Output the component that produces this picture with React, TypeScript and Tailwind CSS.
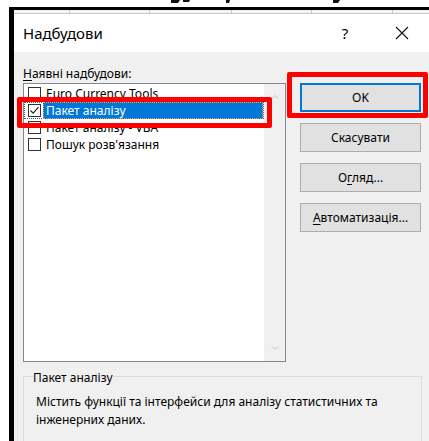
import { ChevronDown, ChevronUp } from 'lucide-react';

interface AddIn {
    name: string;
    checked: boolean;
}

const addIns: AddIn[] = [
    { name: 'Euro Currency Tools', checked: false },
    { name: 'Пакет аналізу', checked: true },
    { name: 'Пакет аналізу - VBA', checked: false },
    { name: "Пошук розв'язання", checked: false },
];

const selectedIndex = 1;

function CheckBox({ checked }: { checked: boolean }) {
    return (
        <span className="w-[13px] h-[13px] border border-[#333333] bg-white flex items-center justify-center shrink-0">
            {checked && (
                <svg width="11" height="11" viewBox="0 0 11 11" fill="none">
                    <path d="M1.5 5.5 L4.2 8.2 L9.5 2.2" stroke="#222" strokeWidth="1.2" />
                </svg>
            )}
        </span>
    );
}

function DialogButton({ children, primary }: { children: React.ReactNode; primary?: boolean }) {
    return (
        <button
            className={`w-[121px] h-[29px] bg-[#e1e1e1] text-[12px] text-black ${primary
                ? 'border-2 border-[#0078d7]'
                : 'border border-[#adadad]'
                }`}
        >
            {children}
        </button>
    );
}

export default function App() {
    return (
        <div className="w-[429px] h-[441px] overflow-hidden bg-white relative font-['Noto_Sans',sans-serif] text-black">
            {/* Tail of the sheet heading behind the window */}
            <svg className="block" width="429" height="7" viewBox="0 0 429 7">
                <path d="M171 0 h9 l-2 3 h-7 z" fill="#111" />
                <path d="M183 0 h7 l-1 2 h-6 z" fill="#111" />
                <path d="M226 0 h4 l-1 3 h-3 z" fill="#111" />
                <path d="M333 0 h7 l-2 3 h-5 z" fill="#111" />
            </svg>

            <div className="ml-[9px] border-l-[5px] border-t-[3px] border-black h-[434px] flex flex-col">
                {/* Column edges of the grid behind */}
                <div className="h-[4px] shrink-0 flex bg-[#f4f4f4] border-b border-[#c8c8c8]">
                    <div className="w-[56px] border-r border-[#c8c8c8]" />
                    <div className="w-[80px] border-r border-[#c8c8c8]" />
                    <div className="w-[82px] border-r border-[#c8c8c8]" />
                    <div className="w-[80px] border-r border-[#c8c8c8]" />
                    <div className="w-[81px] border-r border-[#c8c8c8]" />
                </div>

                {/* Title bar */}
                <div className="h-[38px] shrink-0 bg-white flex items-center pl-[9px]">
                    <span className="text-[15px] flex-1">Надбудови</span>
                    <span className="text-[15px] w-[20px] text-center mr-[40px]">?</span>
                    <svg className="mr-[20px]" width="14" height="14" viewBox="0 0 14 14">
                        <path d="M1 1 L13 13 M13 1 L1 13" stroke="#111" strokeWidth="1.1" />
                    </svg>
                </div>

                {/* Body */}
                <div className="flex-1 min-h-0 overflow-hidden bg-[#f0f0f0] pl-[9px] pt-[14px] text-[12px]">
                    <div className="h-[16px] leading-[16px]">
                        <span className="underline underline-offset-2">Н</span>аявні надбудови:
                    </div>

                    <div className="flex gap-[14px] mt-[1px]">
                        <div className="w-[263px] h-[279px] border border-[#828790] bg-white flex">
                            <div className="flex-1 pt-[1px]">
                                {addIns.map((item, i) => (
                                    <div
                                        key={item.name}
                                        className={`h-[17px] flex items-center pl-[3px] ${i === selectedIndex ? 'border border-dotted border-[#555]' : 'border border-transparent'}`}
                                    >
                                        <CheckBox checked={item.checked} />
                                        <span
                                            className={`ml-[2px] h-[17px] leading-[15px] pl-[2px] ${i === selectedIndex
                                                ? 'flex-1 bg-[#0078d7] text-white border border-dotted border-[#f0a050]'
                                                : 'border border-transparent'
                                                }`}
                                        >
                                            {item.name}
                                        </span>
                                    </div>
                                ))}
                            </div>
                            <div className="w-[21px] bg-[#f0f0f0] flex flex-col items-center justify-between py-[7px]">
                                <ChevronUp className="w-[12px] h-[12px] text-[#c4c4c4]" strokeWidth={2} />
                                <ChevronDown className="w-[12px] h-[12px] text-[#c4c4c4]" strokeWidth={2} />
                            </div>
                        </div>

                        <div className="flex flex-col gap-[11px]">
                            <DialogButton primary>OK</DialogButton>
                            <DialogButton>Скасувати</DialogButton>
                            <DialogButton>
                                О<span className="underline underline-offset-2">г</span>ляд...
                            </DialogButton>
                            <DialogButton>
                                <span className="underline underline-offset-2">А</span>втоматизація...
                            </DialogButton>
                        </div>
                    </div>

                    <fieldset className="mt-[4px] w-[399px] border border-[#dcdcdc] h-[80px]">
                        <legend className="ml-[9px] pt-[4px] leading-[16px]">Пакет аналізу</legend>
                        <p className="pl-[12px] pt-[7px] leading-[18px]">
                            Містить функції та інтерфейси для аналізу статистичних та
                            <br />
                            інженерних даних.
                        </p>
                    </fieldset>
                </div>
            </div>

            {/* Highlight frames */}
            <div className="absolute left-[17px] top-[97px] w-[255px] h-[31px] border-[5px] border-[#ff0000] rounded-[2px]" />
            <div className="absolute left-[287px] top-[72px] w-[141px] h-[46px] border-[5px] border-[#ff0000] rounded-[2px]" />
        </div>
    );
}
